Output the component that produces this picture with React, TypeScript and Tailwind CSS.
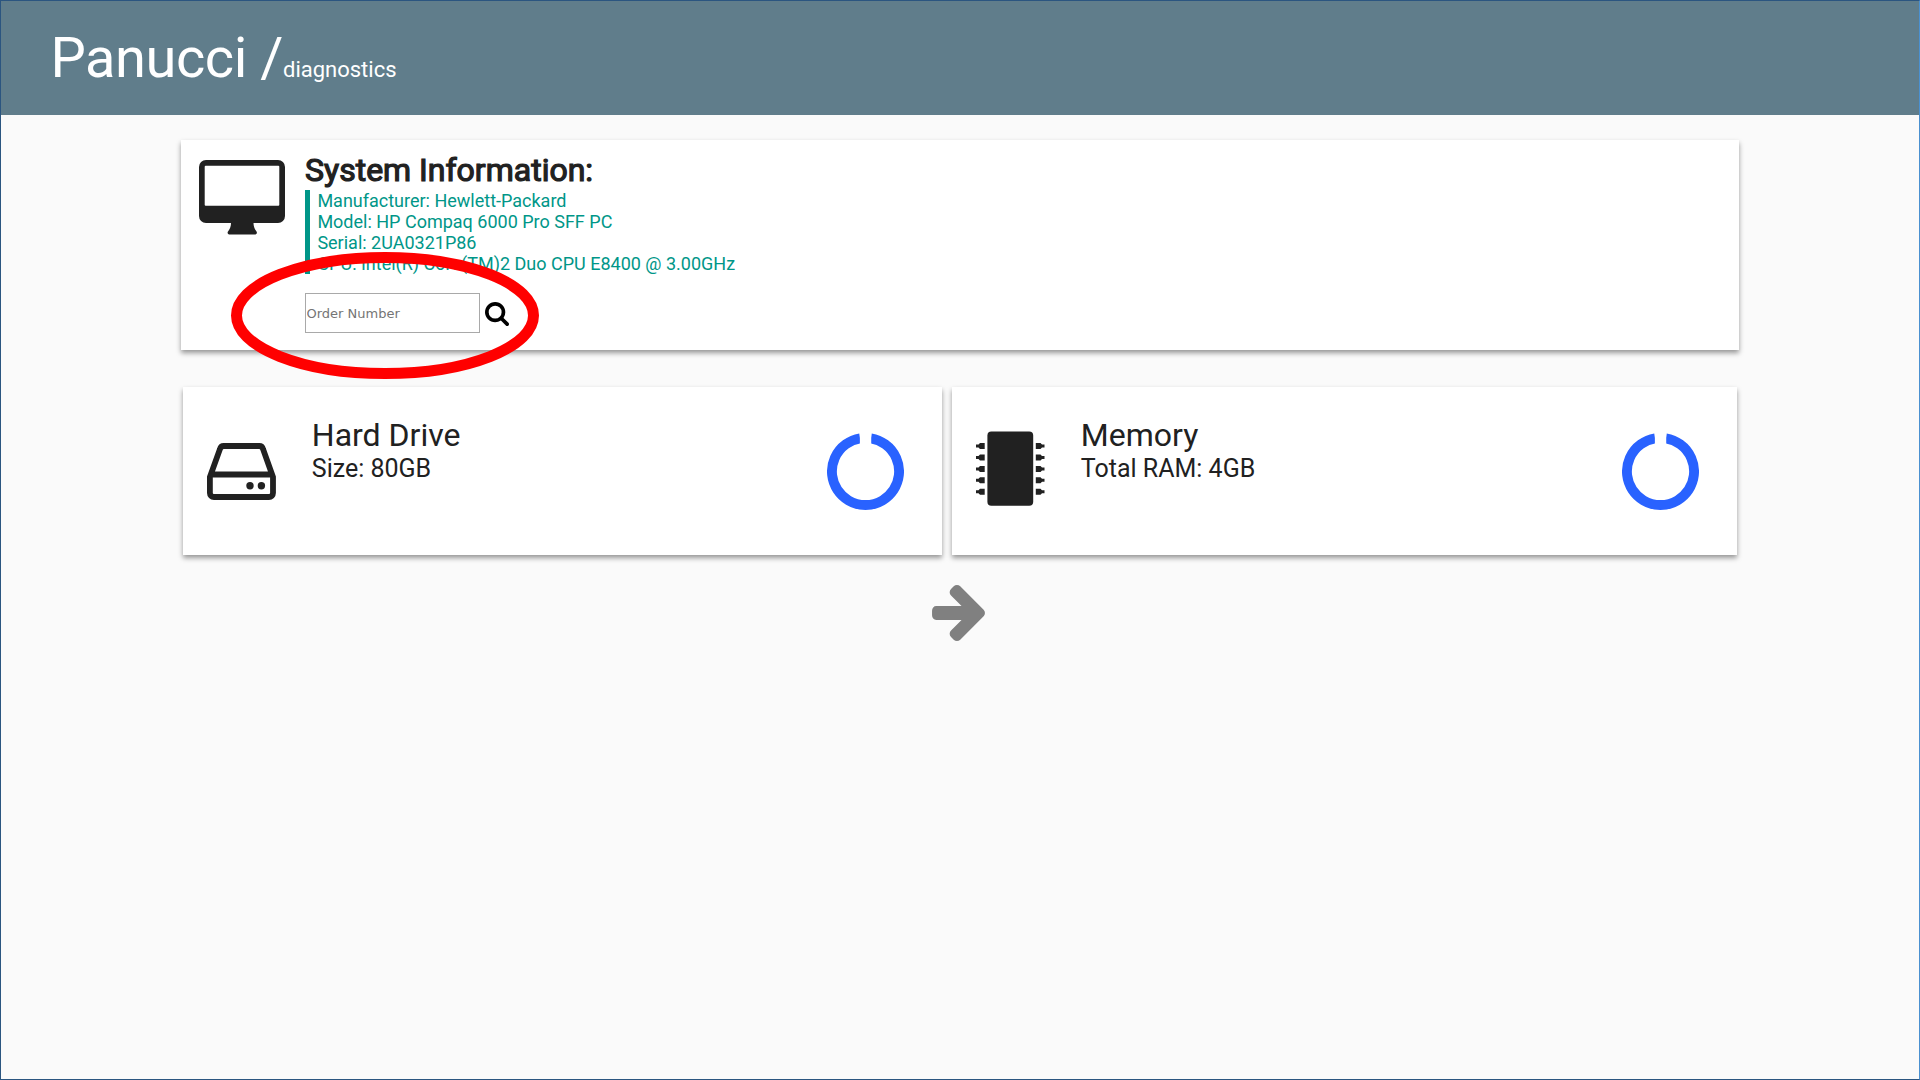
import type { ReactNode } from "react";

const cardShadow = "shadow-[0_3px_5px_rgba(0,0,0,0.4)]";

function Ring({ className }: { className: string }) {
  return (
    <svg className={className} viewBox="0 0 78 78" fill="none">
      <path d="M44.5 5.4A34 34 0 1 1 33.5 5.4" stroke="#2962ff" strokeWidth="10" />
      <path d="M33.3 0h11.5v12H33.3z" fill="#fff" />
    </svg>
  );
}

function Monitor() {
  return (
    <svg className="absolute left-[18px] top-[20.3px] h-[75px] w-[87px]" viewBox="0 0 87 75" fill="#212121">
      <path fillRule="evenodd" d="M7 0H79a7 7 0 0 1 7 7V56a7 7 0 0 1-7 7H54.500c0 3 1 6 3 8.500 1 1.500 0 3-2 3H31c-2 0-3-1.500-2-3 2-2.500 3-5.500 3-8.500H7a7 7 0 0 1-7-7V7a7 7 0 0 1 7-7zM6.700 5.700a1 1 0 0 0-1 1V44.700a1 1 0 0 0 1 1H79.300a1 1 0 0 0 1-1V6.700a1 1 0 0 0-1-1z" />
    </svg>
  );
}

function Drive() {
  return (
    <svg className="h-[57px] w-[69px]" viewBox="0 0 69 57" fill="none" stroke="#212121" strokeWidth="5.8">
      <path d="M2.900 34V50a4 4 0 0 0 4 4H62a4 4 0 0 0 4-4V34L56 6a4 4 0 0 0-4-3H17a4 4 0 0 0-4 3zM4 31.500H65" />
      <circle cx="43" cy="42.700" r="3.700" fill="#212121" stroke="none" />
      <circle cx="54.400" cy="42.700" r="3.700" fill="#212121" stroke="none" />
    </svg>
  );
}

function Chip() {
  const rows = [12, 23.4, 34.9, 46.3, 57.8];
  return (
    <svg className="h-[75px] w-[69px]" viewBox="0 0 69 75" fill="#212121">
      <rect x="11.400" y="0.600" width="45.800" height="74.200" rx="4" />
      {rows.map((y) => (
        <path key={y} d={`M0 ${y + 1.5}h2.500l1.500-1.500h4.700v6H4l-1.500-1.500H0zM68.500 ${y + 1.5}h-2.500l-1.500-1.500h-4.700v6h4.700l1.500-1.500h2.500z`} />
      ))}
    </svg>
  );
}

function Device({ icon, title, detail, className }: { icon: ReactNode; title: string; detail: string; className: string }) {
  return (
    <section className={`flex h-[168px] bg-white ${cardShadow} ${className}`}>
      {icon}
      <div className="pt-[29px]">
        <h2 className="text-[32px] leading-[38px]">{title}</h2>
        <p className="text-[25px] leading-[30px]">{detail}</p>
      </div>
      <Ring className="ml-auto mr-[38px] mt-[46px] h-[77px] w-[77px]" />
    </section>
  );
}

export default function App() {
  return (
    <div className="flex h-[1080px] w-[1920px] flex-col overflow-hidden border border-[#2b5580] border-r-[#4a90d0] bg-[#fafafa] font-[Roboto,sans-serif] text-[#212121]">
      <header className="flex h-[114px] shrink-0 items-baseline bg-[#607d8b] pl-[49.5px] pt-[24px] text-white">
        <span className="whitespace-pre text-[56px] leading-[66px] tracking-[-0.45px]">Panucci /</span>
        <span className="text-[22px]">diagnostics</span>
      </header>

      <section className={`relative ml-[180px] mt-[25px] h-[210px] w-[1558px] shrink-0 bg-white pl-[124px] pt-[11px] ${cardShadow}`}>
        <Monitor />
        <h1 className="h-[39px] text-[32px] leading-[38px] [-webkit-text-stroke:1.2px_#212121]">System Information:</h1>
        <div className="h-[84px] border-l-[5px] border-[#009688] pl-[7.4px] text-[18px] leading-[21px] text-[#009688]">
          <p>Manufacturer: Hewlett-Packard</p>
          <p>Model: HP Compaq 6000 Pro SFF PC</p>
          <p>Serial: 2UA0321P86</p>
          <p>CPU: Intel(R) Core(TM)2 Duo CPU E8400 @ 3.00GHz</p>
        </div>
        <div className="mt-[19px] flex items-center">
          <input
            placeholder="Order Number"
            className="h-[40px] w-[175px] border border-[#a9a9a9] pl-[0.5px] pt-px [font-family:DejaVu_Sans,sans-serif] text-[13px] placeholder:text-[#757575]"
          />
          <svg className="ml-[5px] mt-[1px] h-[24px] w-[24px]" viewBox="0 0 1664 1664">
            <path d="M1152 704q0-185-131.500-316.500T704 256 387.500 387.500 256 704t131.500 316.500T704 1152t316.500-131.500T1152 704zm512 832q0 52-38 90t-90 38q-54 0-90-38l-343-342q-179 124-399 124-143 0-273.500-55.500t-225-150-150-225T0 704t55.500-273.500 150-225 225-150T704 0t273.500 55.500 225 150 150 225T1408 704q0 220-124 399l343 343q37 37 37 90z" />
          </svg>
        </div>
        <svg className="absolute left-[50px] top-[112px] h-[127px] w-[308px]" viewBox="0 0 308 127" fill="none">
          <ellipse cx="154" cy="63.500" rx="148.500" ry="58" stroke="#f00" strokeWidth="11" />
        </svg>
      </section>

      <div className="ml-[182px] mt-[37px] flex gap-[10px]">
        <Device className="w-[759px]" title="Hard Drive" detail="Size: 80GB" icon={<div className="w-[128.8px] pl-[24px] pt-[56px]"><Drive /></div>} />
        <Device className="w-[785px]" title="Memory" detail="Total RAM: 4GB" icon={<div className="w-[128.8px] pl-[24px] pt-[44px]"><Chip /></div>} />
      </div>

      <svg className="ml-[931.4px] mt-[30px] h-[56px] w-[53px]" viewBox="0 0 1472 1558" fill="#808080">
        <path d="M1472 779q0 54-37 91l-651 651q-39 37-91 37-51 0-90-37l-75-75q-38-38-38-91t38-91l293-293H117q-52 0-84.500-37.500T0 843V715q0-53 32.500-90.500T117 587h704L528 293q-38-36-38-90t38-90l75-75q38-38 90-38 53 0 91 38l651 651q37 35 37 90z" />
      </svg>
    </div>
  );
}
